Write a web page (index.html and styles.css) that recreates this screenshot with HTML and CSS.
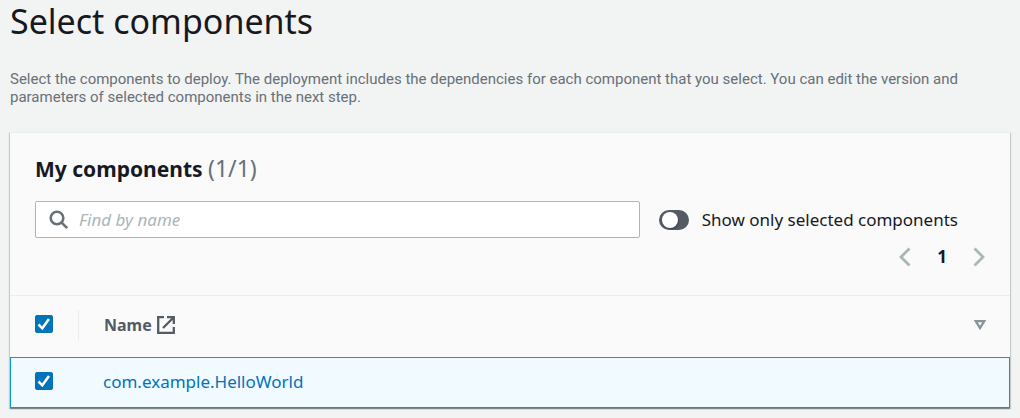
FILE: index.html
```html
<!DOCTYPE html>
<html lang="en">
<head>
<meta charset="utf-8">
<meta name="viewport" content="width=device-width, initial-scale=1">
<title>Select components</title>
<link rel="stylesheet" href="styles.css">
</head>
<body>
<main class="page">
  <h1 class="page-title">Select components</h1>
  <p class="page-description">Select the components to deploy. The deployment includes the dependencies for each component that you select. You can edit the version and parameters of selected components in the next step.</p>

  <section class="panel" aria-labelledby="panel-title">
    <header class="panel-header">
      <h2 class="panel-title" id="panel-title">My components <span class="counter">(1/1)</span></h2>
      <div class="tools">
        <div class="search">
          <svg class="search-icon" viewBox="0 0 20 20" aria-hidden="true"><circle cx="8" cy="8" r="6.3"/><path d="M12.6 12.6 18.2 18.2"/></svg>
          <input class="search-input" type="text" placeholder="Find by name" aria-label="Find by name">
        </div>
        <label class="toggle"><input class="switch" type="checkbox" role="switch"><span>Show only selected components</span></label>
      </div>
      <nav class="pagination" aria-label="Pagination">
        <button class="page-arrow" type="button" aria-label="Previous page"><svg viewBox="0 0 12 20" aria-hidden="true"><path d="M10.500 1.500 2 10l8.500 8.500"/></svg></button>
        <button class="page-number" type="button" aria-current="page">1</button>
        <button class="page-arrow" type="button" aria-label="Next page"><svg viewBox="0 0 12 20" aria-hidden="true"><path d="M1.500 1.500 10 10l-8.500 8.500"/></svg></button>
      </nav>
    </header>

    <table class="table">
      <thead>
        <tr>
          <th class="select-cell" scope="col"><input class="checkbox" type="checkbox" checked aria-label="Select all components"></th>
          <th class="name-heading" scope="col">
            <div class="heading-content">
              <span class="heading-label">Name <svg class="external-icon" viewBox="0 0 18 18" aria-hidden="true"><path d="M7 1.200H1.200v15.600h15.600V11M6 12 16.300 1.700M10 1.200h6.800V8"/></svg></span>
              <button class="sort" type="button" aria-label="Sort by name"><svg viewBox="0 0 12 10" aria-hidden="true"><path d="M1.800 1.200h8.400L6 8z"/></svg></button>
            </div>
          </th>
        </tr>
      </thead>
      <tbody>
        <tr>
          <td class="select-cell"><input class="checkbox" type="checkbox" checked aria-label="Select com.example.HelloWorld"></td>
          <td class="name-cell"><a class="link" href="#">com.example.HelloWorld</a></td>
        </tr>
      </tbody>
    </table>
  </section>
</main>
</body>
</html>
```
FILE: styles.css
```css
* {
  box-sizing: border-box;
}

body {
  margin: 0;
  background: #f2f3f3;
  color: #16191f;
  font-family: "Noto Sans", "Open Sans", sans-serif;
  font-size: 17px;
  line-height: 24px;
}

button,
input {
  margin: 0;
  font: inherit;
}

button {
  padding: 0;
  border: 0;
  background: none;
  color: inherit;
  cursor: pointer;
}

svg {
  display: block;
  fill: none;
  stroke: currentColor;
}

.page {
  padding: 0 10px 10px;
}

.page-title {
  margin: 0;
  font-size: 34px;
  font-weight: 400;
  line-height: 42px;
}

.page-description {
  margin: 28px 0 26px;
  color: #687078;
  font-family: Roboto, "Noto Sans", sans-serif;
  font-size: 15px;
  line-height: 18px;
}

.panel {
  background: #fafafa;
  box-shadow: 0 1px 1px rgba(0, 28, 36, 0.3), 1px 1px 1px rgba(0, 28, 36, 0.15), -1px 1px 1px rgba(0, 28, 36, 0.15);
  border-top: 1px solid #eaeded;
}

.panel-header {
  padding: 19px 25px 26px;
}

.panel-title {
  margin: 0;
  font-size: 21px;
  font-weight: 700;
  line-height: 32px;
}

.counter {
  color: #687078;
  font-size: 23px;
  font-weight: 400;
}

.tools {
  display: flex;
  align-items: center;
  gap: 19px;
  margin-top: 16px;
  padding-right: 27px;
}

.search {
  display: flex;
  flex: 1;
  align-items: center;
  gap: 10px;
  height: 37px;
  padding: 0 13px;
  border: 1px solid #aab7b8;
  border-radius: 2px;
  background: #fff;
}

.search-icon {
  flex: none;
  width: 20px;
  height: 20px;
  color: #687078;
  stroke-width: 2.6;
}

.search-input {
  flex: 1;
  min-width: 0;
  padding: 0;
  border: 0;
  outline: 0;
  background: none;
  color: inherit;
}

.search-input::placeholder {
  color: #aab7b8;
  font-style: italic;
  opacity: 1;
}

.toggle {
  display: flex;
  align-items: center;
  gap: 13px;
  white-space: nowrap;
}

.switch {
  display: flex;
  align-items: center;
  width: 30px;
  height: 20px;
  padding: 0 3px;
  border-radius: 10px;
  background: #545b64;
  appearance: none;
}

.switch::before {
  width: 16px;
  height: 16px;
  border-radius: 50%;
  background: #fff;
  box-shadow: 1px 1px 1px rgba(0, 0, 0, 0.25);
  content: "";
}

.switch:checked {
  justify-content: flex-end;
  background: #0073bb;
}

.pagination {
  display: flex;
  align-items: center;
  justify-content: flex-end;
  gap: 24px;
  margin-top: 7px;
}

.page-arrow {
  color: #aab7b8;
}

.page-arrow svg {
  width: 12px;
  height: 20px;
  stroke-width: 2.8;
}

.page-number {
  width: 14px;
  font-weight: 700;
  text-align: center;
}

.table {
  width: 100%;
  border-collapse: separate;
  border-spacing: 0;
}

.table th {
  height: 62px;
  padding: 0 0 4px;
  border-top: 1px solid #eaeded;
  color: #545b64;
  font-size: 16px;
  text-align: left;
}

.table td {
  height: 51px;
  padding: 0 0 2px;
  border: solid #00a1c9;
  border-width: 1px 0;
  background: #f1faff;
}

.table td:first-child {
  border-left-width: 1px;
}

.table td:last-child {
  border-right-width: 1px;
}

.table .select-cell {
  width: 68px;
  padding-bottom: 5px;
  padding-left: 25px;
}

.table td.select-cell {
  padding-bottom: 3px;
  padding-left: 24px;
}

.checkbox {
  display: block;
  width: 18px;
  height: 18px;
  border: 1px solid #687078;
  border-radius: 2px;
  background: #fff;
  appearance: none;
}

.checkbox:checked {
  border-color: #0073bb;
  background: #0073bb url("data:image/svg+xml,%3Csvg xmlns='http://www.w3.org/2000/svg' viewBox='0 0 16 16'%3E%3Cpath d='M2.500 8.500 6.300 12.300 13 3' fill='none' stroke='white' stroke-width='2.500'/%3E%3C/svg%3E") center / 16px 16px no-repeat;
}

.heading-content {
  display: flex;
  align-items: center;
  justify-content: space-between;
  height: 30px;
  padding: 0 24px 0 25px;
  border-left: 1px solid #eaeded;
}

.heading-label {
  display: flex;
  align-items: center;
  gap: 5px;
}

.external-icon {
  width: 18px;
  height: 18px;
  stroke-width: 2.3;
}

.sort {
  color: #879596;
}

.sort svg {
  width: 12px;
  height: 10px;
  stroke-width: 2.3;
}

.table .name-cell {
  padding-left: 25px;
}

.link {
  color: #0073bb;
  text-decoration: none;
}
```
